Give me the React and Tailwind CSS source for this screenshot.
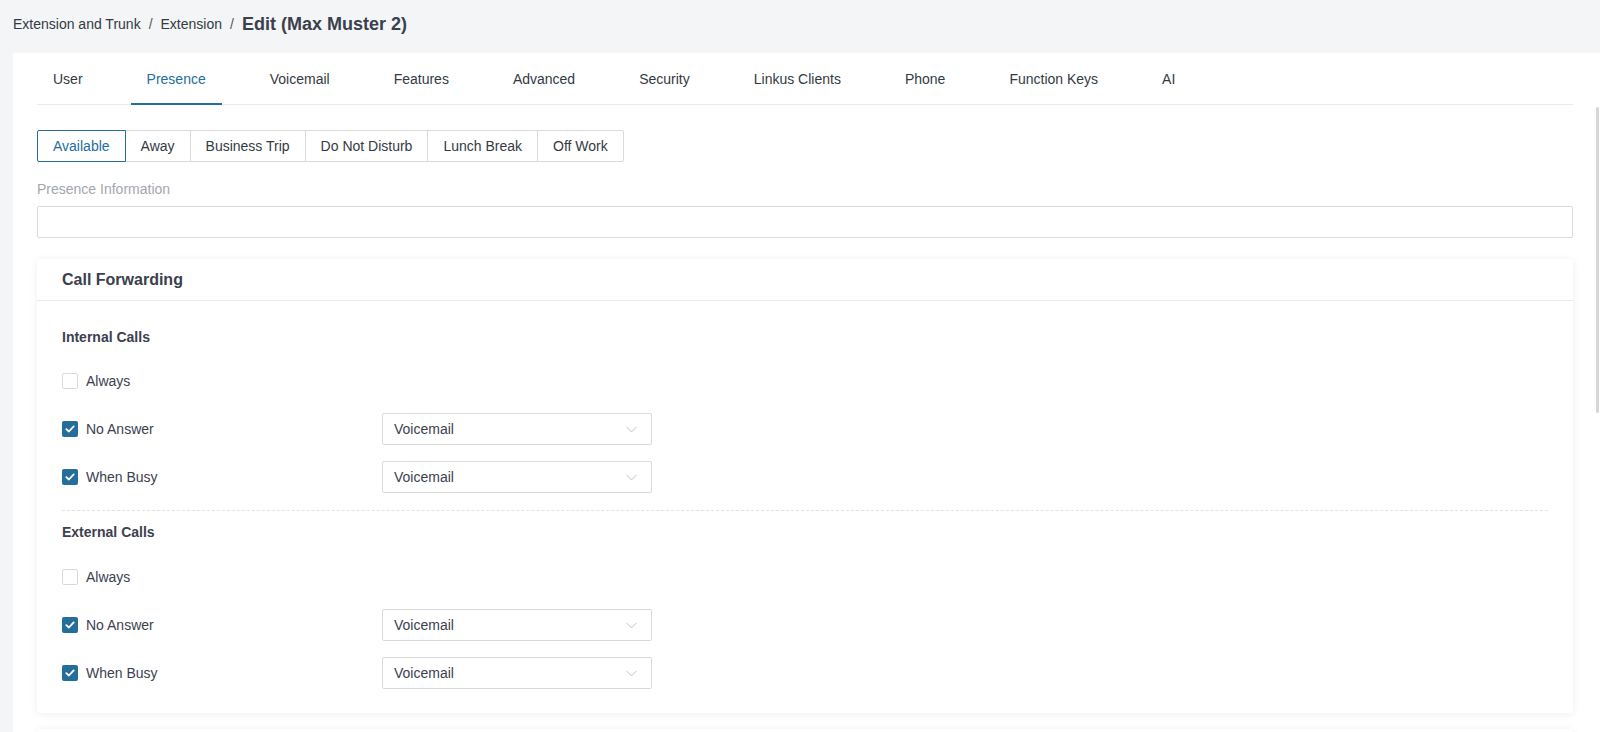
import React from "react";

function Check({ checked }) {
  if (!checked) {
    return <span className="inline-block w-4 h-4 rounded-[2px] border border-[#d9d9d9] bg-white shrink-0" />;
  }
  return (
    <span className="inline-flex items-center justify-center w-4 h-4 rounded-[2px] bg-[#236e9b] shrink-0">
      <svg width="10" height="8" viewBox="0 0 10 8" fill="none">
        <path d="M1.3 4.1 L3.9 6.5 L8.7 1.4" stroke="white" strokeWidth="1.8" strokeLinecap="round" strokeLinejoin="round" />
      </svg>
    </span>
  );
}

function Select() {
  return (
    <div className="w-[270px] h-8 border border-[#d9d9d9] rounded-[2px] bg-white flex items-center justify-between pl-[11px] pr-[14px] text-[14px] text-[#3b4150]">
      <span>Voicemail</span>
      <svg width="11" height="7" viewBox="0 0 11 7" fill="none">
        <path d="M0.5 0.8 L5.5 6 L10.5 0.8" stroke="#c4c4c4" strokeWidth="1" />
      </svg>
    </div>
  );
}

function Row({ label, checked, select }) {
  return (
    <div className="h-8 flex items-center">
      <div className="w-[320px] flex items-center gap-2">
        <Check checked={checked} />
        <span className="text-[14px] text-[#3b4150]">{label}</span>
      </div>
      {select && <Select />}
    </div>
  );
}

function Group({ title, gapClass }) {
  return (
    <div>
      <div className={"h-[22px] leading-[22px] text-[14px] font-bold text-[#3b4150] " + gapClass}>{title}</div>
      <div className="flex flex-col gap-4">
        <Row label="Always" checked={false} />
        <Row label="No Answer" checked select />
        <Row label="When Busy" checked select />
      </div>
    </div>
  );
}

export default function App() {
  const tabs = ["User", "Presence", "Voicemail", "Features", "Advanced", "Security", "Linkus Clients", "Phone", "Function Keys", "AI"];
  const statuses = ["Available", "Away", "Business Trip", "Do Not Disturb", "Lunch Break", "Off Work"];
  return (
    <div className="h-[732px] w-[1600px] overflow-hidden bg-[#f4f5f7] flex flex-col relative" style={{ fontFamily: '"Liberation Sans", Arial, sans-serif' }}>
      <div className="h-[53px] shrink-0 flex items-center pl-[13px] pb-[4px] gap-2 text-[#333a44]">
        <span className="text-[14px]">Extension and Trunk</span>
        <span className="text-[14px] text-[#555]">/</span>
        <span className="text-[14px]">Extension</span>
        <span className="text-[14px] text-[#555]">/</span>
        <span className="text-[18px] font-bold text-[#3a404c]">Edit (Max Muster 2)</span>
      </div>
      <div className="flex-1 ml-[13px] bg-white pl-6 pr-[27px] overflow-hidden">
        <div className="h-[52px] flex gap-8 border-b border-[#ebebeb]">
          {tabs.map((t) => (
            <div key={t} className={"px-4 flex items-center text-[14px] relative " + (t === "Presence" ? "text-[#236e9b]" : "text-[#333a44]")}>
              <span className="pt-[2px]">{t}</span>
              {t === "Presence" && <span className="absolute left-0 right-0 bottom-[-1px] h-[2px] bg-[#236e9b]" />}
            </div>
          ))}
        </div>
        <div className="mt-[25px] flex">
          {statuses.map((s, i) => (
            <div
              key={s}
              className={
                "h-8 px-[15px] flex items-center text-[14px] border " +
                (i === 0
                  ? "border-[#236e9b] text-[#236e9b] rounded-l-[2px] relative z-10"
                  : "border-[#d9d9d9] text-[#333a44] -ml-px") +
                (i === statuses.length - 1 ? " rounded-r-[2px]" : "")
              }
            >
              {s}
            </div>
          ))}
        </div>
        <div className="mt-4 h-[22px] leading-[22px] text-[14px] text-[#a3a7ad]">Presence Information</div>
        <div className="mt-[6px] h-8 border border-[#d9d9d9] rounded-[2px]" />
        <div className="mt-[21px] bg-white rounded-[4px] shadow-[0_1px_8px_rgba(0,0,0,0.07)]">
          <div className="h-[42px] border-b border-[#ebebeb] flex items-center px-[25px]">
            <span className="text-[16px] font-bold text-[#3a404c]">Call Forwarding</span>
          </div>
          <div className="px-[25px] pt-[25px] pb-6">
            <Group title="Internal Calls" gapClass="mb-[17px]" />
            <div className="mt-[17px] border-t border-dashed border-[#e3e3e3] pt-[10px]">
              <Group title="External Calls" gapClass="mb-[18px]" />
            </div>
          </div>
        </div>
        <div className="mt-4 h-[120px] bg-white rounded-[4px] shadow-[0_1px_8px_rgba(0,0,0,0.07)]" />
      </div>
      <div className="absolute right-[1px] top-[107px] w-[3px] h-[306px] rounded-full bg-[#d6d6d6]" />
    </div>
  );
}
